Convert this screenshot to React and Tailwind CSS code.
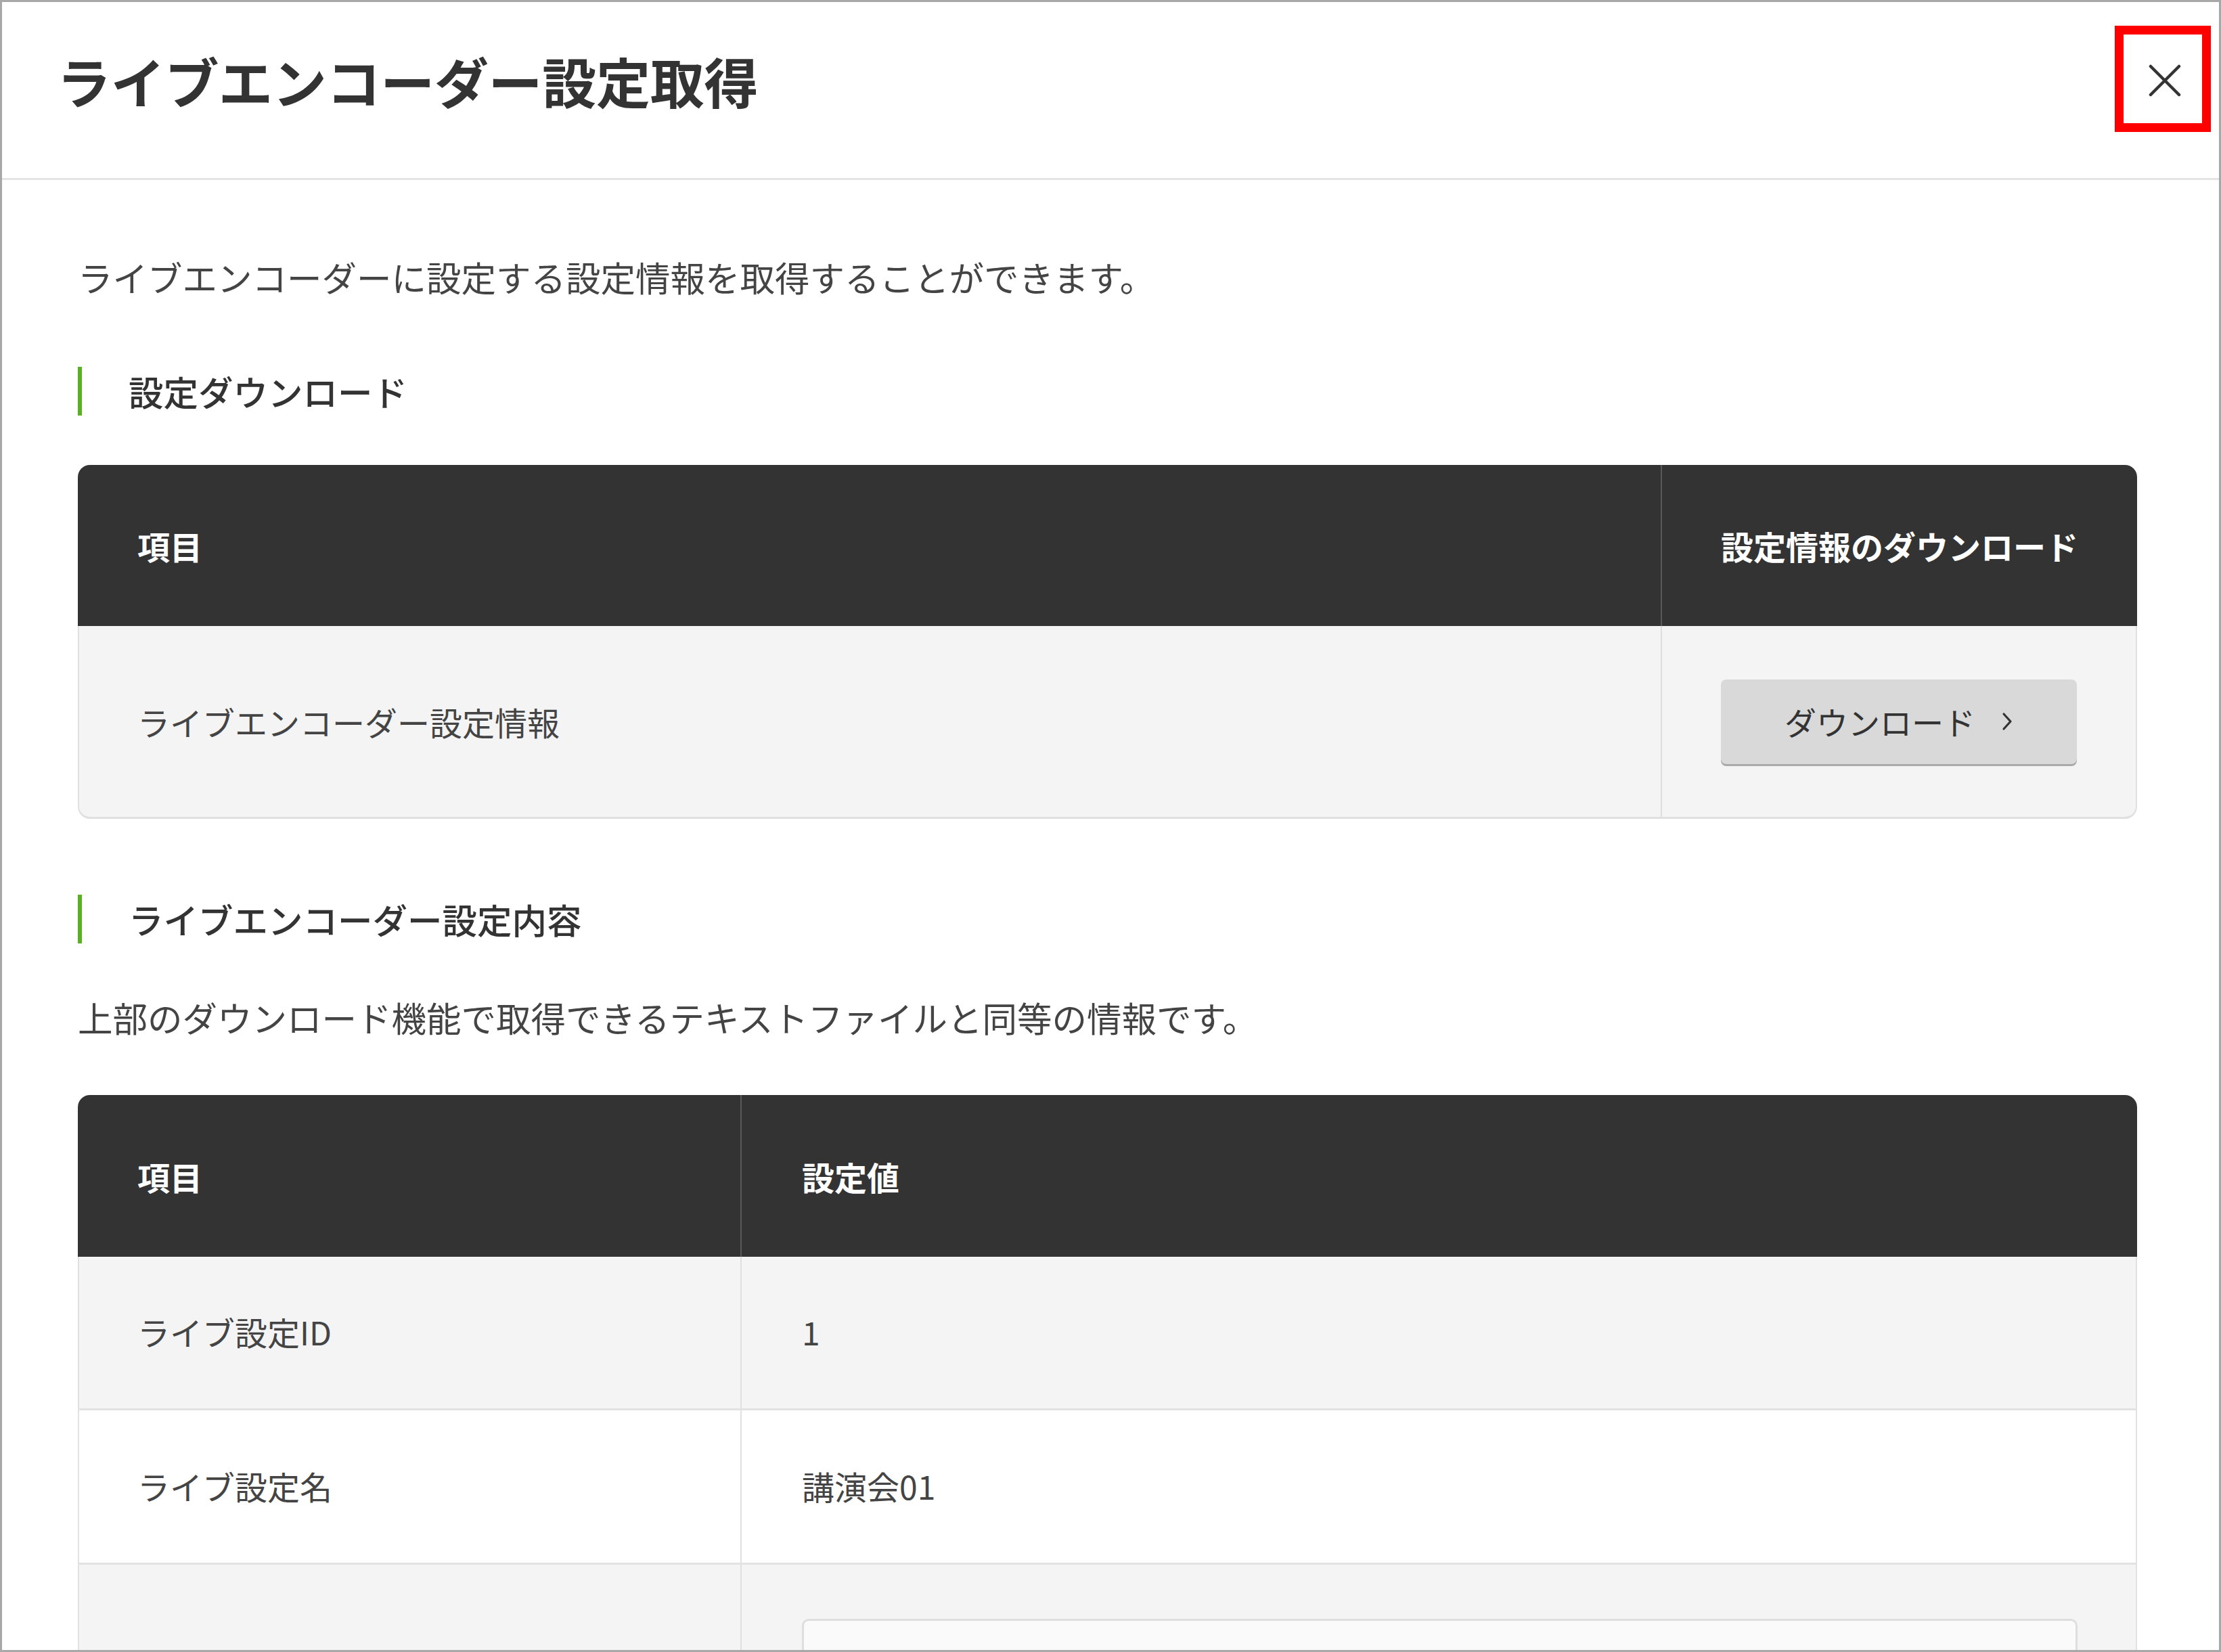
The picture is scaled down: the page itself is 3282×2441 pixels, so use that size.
import React from "react";

const font = { fontFamily: '"Noto Sans CJK JP", "Noto Sans", sans-serif' };

function SectionHeading({ children, className = "" }) {
  return (
    <div className={"flex items-center h-[72px] " + className}>
      <div className="w-[6px] h-full bg-[#57b21f]" />
      <div className="ml-[69px] text-[51.5px] leading-[72px] font-medium text-[#333333] whitespace-nowrap">{children}</div>
    </div>
  );
}

function Chevron() {
  return (
    <svg width="18" height="28" viewBox="0 0 18 28" fill="none">
      <path d="M4 3 L14 14 L4 25" stroke="#333333" strokeWidth="3.2" strokeLinecap="round" strokeLinejoin="round" />
    </svg>
  );
}

export default function App() {
  return (
    <div
      style={font}
      className="w-[3282px] h-[2441px] box-border border-[3px] border-[#a8a8a8] bg-white overflow-hidden relative flex flex-col"
    >
      {/* Header */}
      <div className="h-[260px] shrink-0 box-content border-b-[3px] border-[#e4e4e4] flex justify-between items-start pl-[81px] pr-[56px]">
        <h1 className="mt-[75px] text-[80px] leading-[80px] font-bold text-[#333333] tracking-[-0.3px] whitespace-nowrap">
          ライブエンコーダー設定取得
        </h1>
        <button className="mt-[92px] w-[48px] h-[48px] flex items-center justify-center">
          <svg width="48" height="48" viewBox="0 0 48 48" fill="none">
            <path d="M3 3 L45 45 M45 3 L3 45" stroke="#333333" strokeWidth="4.5" strokeLinecap="round" />
          </svg>
        </button>
      </div>

      {/* annotation box */}
      <div className="absolute left-[3122px] top-[35px] w-[142px] h-[157px] box-border border-[13px] border-[#ff0000]" />

      {/* Body */}
      <div className="flex flex-col pl-[112px] pr-[121px] pt-[105px]">
        <p className="text-[51.5px] leading-[76px] text-[#444444] whitespace-nowrap">
          ライブエンコーダーに設定する設定情報を取得することができます。
        </p>

        <SectionHeading className="mt-[95px]">設定ダウンロード</SectionHeading>

        {/* Table 1 */}
        <div className="mt-[73px] flex flex-col">
          <div className="h-[238px] bg-[#333333] rounded-t-[18px] flex">
            <div className="w-[2340px] flex items-center px-[88px] text-[48px] font-bold text-white">項目</div>
            <div className="w-[2px] bg-[#5a5a5a]" />
            <div className="flex-1 flex items-center px-[87px] text-[48px] font-bold text-white whitespace-nowrap">
              設定情報のダウンロード
            </div>
          </div>
          <div className="h-[285px] box-border bg-[#f4f4f4] border-x-[2px] border-b-[3px] border-[#e0e0e0] rounded-b-[18px] flex">
            <div className="w-[2338px] flex items-center px-[86px] text-[48px] text-[#444444]">
              ライブエンコーダー設定情報
            </div>
            <div className="w-[2px] bg-[#dedede]" />
            <div className="flex-1 flex items-center px-[87px]">
              <button className="w-[526px] h-[125px] rounded-[8px] bg-[#d9d9d9] shadow-[0_3px_0_0_#a9a9a9] flex items-center justify-center gap-[38px] text-[47px] text-[#333333]" style={font}>
                <span className="leading-[60px]">ダウンロード</span>
                <Chevron />
              </button>
            </div>
          </div>
        </div>

        <SectionHeading className="mt-[112px] h-[70px]">ライブエンコーダー設定内容</SectionHeading>

        <p className="mt-[71px] text-[51.5px] leading-[76px] text-[#444444] whitespace-nowrap">
          上部のダウンロード機能で取得できるテキストファイルと同等の情報です。
        </p>

        {/* Table 2 */}
        <div className="mt-[77px] flex flex-col">
          <div className="h-[239px] bg-[#333333] rounded-t-[18px] flex">
            <div className="w-[979px] flex items-center px-[88px] text-[48px] font-bold text-white">項目</div>
            <div className="w-[2px] bg-[#5a5a5a]" />
            <div className="flex-1 flex items-center px-[89px] text-[48px] font-bold text-white">設定値</div>
          </div>
          <div className="h-[224px] box-border bg-[#f4f4f4] border-x-[2px] border-[#e0e0e0] flex">
            <div className="w-[977px] flex items-center px-[86px] pb-[4px] text-[48px] text-[#444444]">ライブ設定ID</div>
            <div className="w-[2px] bg-[#e0e0e0]" />
            <div className="flex-1 flex items-center px-[89px] pb-[4px] text-[48px] text-[#444444]">1</div>
          </div>
          <div className="h-[228px] box-border bg-white border-x-[2px] border-t-[3px] border-[#e2e2e2] flex">
            <div className="w-[977px] flex items-center px-[86px] pb-[4px] text-[48px] text-[#444444]">ライブ設定名</div>
            <div className="w-[2px] bg-[#e0e0e0]" />
            <div className="flex-1 flex items-center px-[89px] pb-[4px] text-[48px] text-[#444444]">講演会01</div>
          </div>
          <div className="h-[400px] box-border bg-[#f4f4f4] border-x-[2px] border-t-[3px] border-[#e2e2e2] flex">
            <div className="w-[977px]" />
            <div className="w-[2px] bg-[#e0e0e0]" />
            <div className="flex-1 pl-[89px] pr-[86px] pt-[80px]">
              <div className="h-[200px] bg-[#fafafa] border-[3px] border-[#dedede] rounded-[10px]" />
            </div>
          </div>
        </div>
      </div>
    </div>
  );
}
